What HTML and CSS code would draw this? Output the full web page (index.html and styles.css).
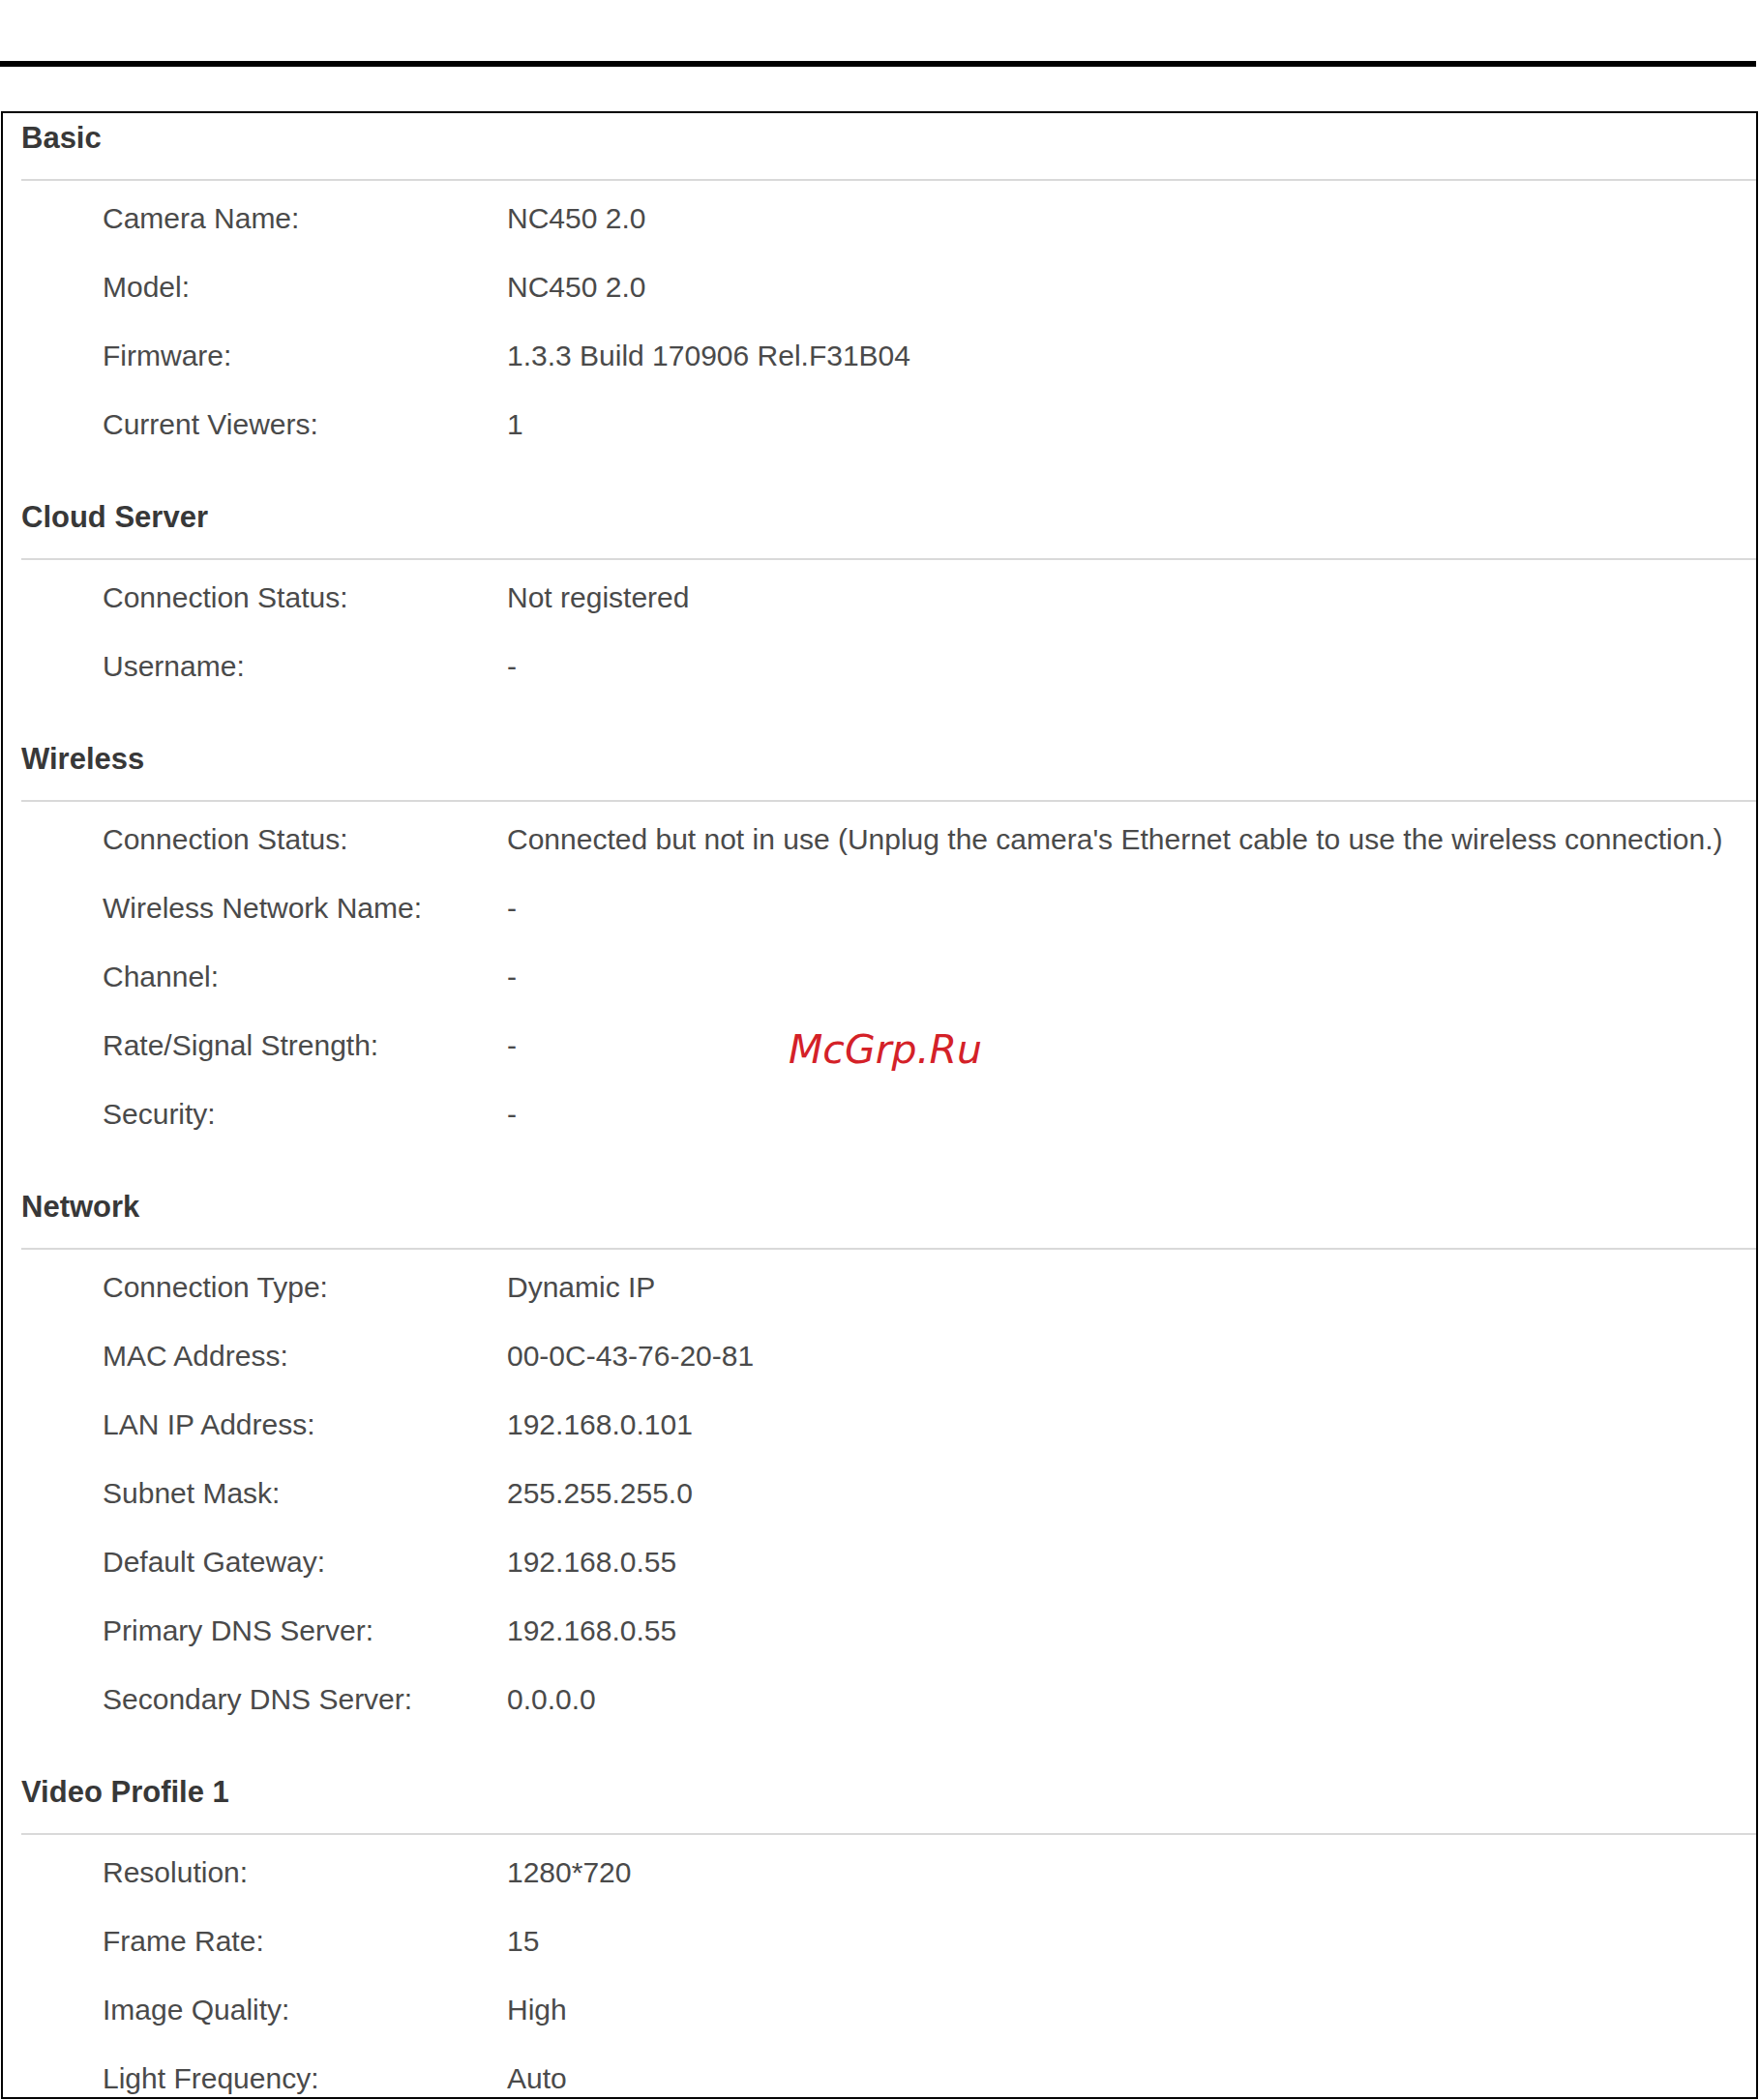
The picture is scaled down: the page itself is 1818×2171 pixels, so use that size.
FILE: index.html
```html
<!DOCTYPE html>
<html lang="en">
<head>
<meta charset="utf-8">
<title>Status</title>
<link rel="stylesheet" href="styles.css">
</head>
<body>
<div class="page">
  <div class="topbar"></div>
  <div class="panel">
    <section class="section first">
      <h2 class="sec-title">Basic</h2>
      <div class="rows">
        <div class="row"><span class="label">Camera Name:</span><span class="value">NC450 2.0</span></div>
        <div class="row"><span class="label">Model:</span><span class="value">NC450 2.0</span></div>
        <div class="row"><span class="label">Firmware:</span><span class="value">1.3.3 Build 170906 Rel.F31B04</span></div>
        <div class="row"><span class="label">Current Viewers:</span><span class="value">1</span></div>
      </div>
    </section>
    <section class="section">
      <h2 class="sec-title">Cloud Server</h2>
      <div class="rows">
        <div class="row"><span class="label">Connection Status:</span><span class="value">Not registered</span></div>
        <div class="row"><span class="label">Username:</span><span class="value">-</span></div>
      </div>
    </section>
    <section class="section">
      <h2 class="sec-title">Wireless</h2>
      <div class="rows">
        <div class="row"><span class="label">Connection Status:</span><span class="value">Connected but not in use (Unplug the camera's Ethernet cable to use the wireless connection.)</span></div>
        <div class="row"><span class="label">Wireless Network Name:</span><span class="value">-</span></div>
        <div class="row"><span class="label">Channel:</span><span class="value">-</span></div>
        <div class="row"><span class="label">Rate/Signal Strength:</span><span class="value">-</span></div>
        <div class="row"><span class="label">Security:</span><span class="value">-</span></div>
      </div>
    </section>
    <section class="section">
      <h2 class="sec-title">Network</h2>
      <div class="rows">
        <div class="row"><span class="label">Connection Type:</span><span class="value">Dynamic IP</span></div>
        <div class="row"><span class="label">MAC Address:</span><span class="value">00-0C-43-76-20-81</span></div>
        <div class="row"><span class="label">LAN IP Address:</span><span class="value">192.168.0.101</span></div>
        <div class="row"><span class="label">Subnet Mask:</span><span class="value">255.255.255.0</span></div>
        <div class="row"><span class="label">Default Gateway:</span><span class="value">192.168.0.55</span></div>
        <div class="row"><span class="label">Primary DNS Server:</span><span class="value">192.168.0.55</span></div>
        <div class="row"><span class="label">Secondary DNS Server:</span><span class="value">0.0.0.0</span></div>
      </div>
    </section>
    <section class="section">
      <h2 class="sec-title">Video Profile 1</h2>
      <div class="rows">
        <div class="row"><span class="label">Resolution:</span><span class="value">1280*720</span></div>
        <div class="row"><span class="label">Frame Rate:</span><span class="value">15</span></div>
        <div class="row"><span class="label">Image Quality:</span><span class="value">High</span></div>
        <div class="row"><span class="label">Light Frequency:</span><span class="value">Auto</span></div>
      </div>
    </section>
  </div>
  <div class="watermark">McGrp.Ru</div>
</div>
</body>
</html>
```

FILE: styles.css
```css
html, body {
  margin: 0;
  padding: 0;
  background: #ffffff;
}

.page {
  position: relative;
  width: 1818px;
  height: 2171px;
  overflow: hidden;
  font-family: "Liberation Sans", Arial, sans-serif;
}

.topbar {
  margin-top: 63px;
  width: 1815px;
  height: 6px;
  background: #000000;
}

.panel {
  box-sizing: border-box;
  margin: 46px 0 0 1px;
  width: 1816px;
  height: 2055px;
  border: 2px solid #000000;
  overflow: hidden;
}

.section {
  padding-left: 19px;
}

.sec-title {
  margin: 0;
  padding: 41px 0 22px 0;
  line-height: 40px;
  font-size: 31px;
  font-weight: bold;
  color: #383838;
  border-bottom: 2px solid #d9d9d9;
}

.section.first .sec-title {
  padding-top: 6px;
}

.rows {
  padding-top: 3px;
}

.row {
  display: grid;
  grid-template-columns: 418px 1fr;
  padding-left: 84px;
  height: 71px;
  line-height: 71px;
  font-size: 30px;
  color: #4a4a4a;
  white-space: nowrap;
}

.watermark {
  position: absolute;
  left: 815px;
  top: 1065px;
  font-family: "DejaVu Sans", sans-serif;
  font-style: italic;
  font-size: 41px;
  line-height: 40px;
  color: #d42128;
}
```
